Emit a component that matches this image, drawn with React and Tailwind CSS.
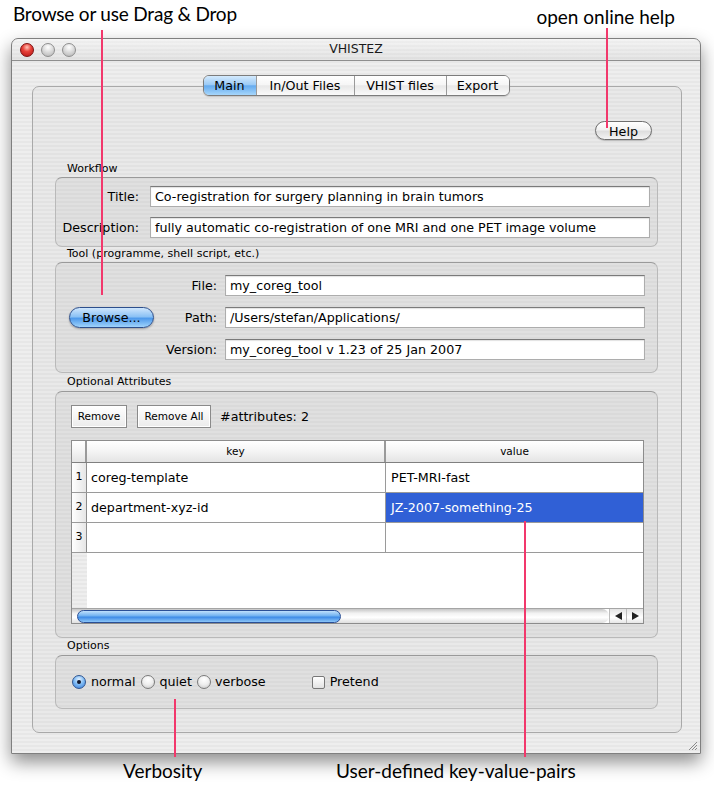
import React from "react";

const stripes =
  "bg-[repeating-linear-gradient(180deg,#eeeeee_0px,#eeeeee_2px,#e7e7e7_2px,#e7e7e7_4px)]";
const panelStripes =
  "bg-[repeating-linear-gradient(180deg,#e9e9e9_0px,#e9e9e9_2px,#e2e2e2_2px,#e2e2e2_4px)]";

function Light({ red }) {
  return red ? (
    <span className="block w-[14px] h-[14px] rounded-full border border-[#7d1010] bg-[radial-gradient(circle_at_50%_28%,#ffc4b8_0%,#e8423a_40%,#b31212_100%)]" />
  ) : (
    <span className="block w-[14px] h-[14px] rounded-full border border-[#8e8e8e] bg-[radial-gradient(circle_at_50%_28%,#ffffff_0%,#dcdcdc_45%,#b0b0b0_100%)]" />
  );
}

function Field({ children, w }) {
  return (
    <div
      className={`${w} h-[21px] bg-white border border-[#adadad] border-t-[#7a7a7a] shadow-[inset_0_1px_1px_rgba(0,0,0,0.12)] px-[4px] flex items-center text-[12.7px] text-black whitespace-nowrap overflow-hidden`}
    >
      {children}
    </div>
  );
}

function Group({ h, children, className = "" }) {
  return (
    <div
      className={`ml-[22px] w-[603px] ${h} rounded-[7px] border border-[#b9b9b9] border-t-[#9a9a9a] bg-black/[0.035] ${className}`}
    >
      {children}
    </div>
  );
}

function Label({ children, h }) {
  return (
    <div className={`${h} pl-[34px] text-[11px] flex items-center text-black`}>
      {children}
    </div>
  );
}

function Radio({ on, className = "" }) {
  return on ? (
    <span className={`flex w-[14px] h-[14px] rounded-full border border-[#2f5590] bg-[radial-gradient(circle_at_50%_30%,#e4f2ff_0%,#7bb8f3_50%,#3979d6_100%)] items-center justify-center ${className}`}>
      <span className="block w-[4px] h-[4px] rounded-full bg-[#101830]" />
    </span>
  ) : (
    <span className={`block w-[14px] h-[14px] rounded-full border border-[#7a7a7a] bg-[radial-gradient(circle_at_50%_30%,#ffffff_0%,#eeeeee_50%,#c4c4c4_100%)] ${className}`} />
  );
}

export default function App() {
  const tabs = [
    { name: "Main", w: "w-[52px]", on: true },
    { name: "In/Out Files", w: "w-[98px]" },
    { name: "VHIST files", w: "w-[92px]" },
    { name: "Export", w: "w-[63px]" },
  ];
  const rows = [
    ["1", "coreg-template", "PET-MRI-fast"],
    ["2", "department-xyz-id", "JZ-2007-something-25"],
    ["3", "", ""],
  ];

  return (
    <div className="relative w-[714px] h-[788px] bg-white overflow-hidden font-['DejaVu_Sans',sans-serif]">
      {/* top notes */}
      <div className="h-[38px] flex justify-between font-['Lato',sans-serif] text-[19px] leading-[24px] text-black">
        <span className="ml-[13px] mt-[2px] tracking-[-0.2px]">Browse or use Drag &amp; Drop</span>
        <span className="mr-[39px] mt-[5px]">open online help</span>
      </div>

      {/* window */}
      <div className={`ml-[11px] w-[690px] h-[716px] rounded-t-[7px] border border-[#7f7f7f] ${stripes} shadow-[0_8px_18px_rgba(0,0,0,0.45)] flex flex-col`}>
        <div className="h-[22px] grid grid-cols-[80px_1fr_80px] items-center border-b border-[#8e8e8e] rounded-t-[7px] bg-[linear-gradient(180deg,rgba(255,255,255,0.35),rgba(0,0,0,0.04))]">
          <div className="flex gap-[7px] pl-[8px]">
            <Light red />
            <Light />
            <Light />
          </div>
          <div className="text-center text-[12.5px] text-[#1a1a1a]">VHISTEZ</div>
          <div />
        </div>

        {/* tabs */}
        <div className="mt-[14px] flex justify-center relative z-10">
          <div className="flex h-[21px] rounded-[6px] border border-[#7c7c7c] overflow-hidden shadow-[0_1px_1px_rgba(0,0,0,0.15)]">
            {tabs.map((t, i) => (
              <div
                key={t.name}
                className={`${t.w} flex items-center justify-center text-[12.7px] text-black ${i > 0 ? "border-l border-[#9a9a9a]" : ""} ${
                  t.on
                    ? "bg-[linear-gradient(180deg,#d4eafd_0%,#9ccbf6_45%,#65abef_52%,#a6d6fb_100%)]"
                    : "bg-[linear-gradient(180deg,#ffffff_0%,#f6f6f6_45%,#e8e8e8_52%,#fafafa_100%)]"
                }`}
              >
                {t.name}
              </div>
            ))}
          </div>
        </div>

        {/* tab panel */}
        <div className={`-mt-[10px] ml-[20px] w-[650px] h-[647px] rounded-[7px] border border-[#a9a9a9] ${panelStripes} flex flex-col`}>
          <div className="mt-[34px] h-[19px] flex justify-end pr-[29px]">
            <button className="w-[57px] h-[19px] rounded-full border border-[#6e6e6e] bg-[linear-gradient(180deg,#ffffff_0%,#f2f2f2_45%,#dedede_55%,#f4f4f4_100%)] text-[12.7px] text-black shadow-[0_1px_1px_rgba(0,0,0,0.2)]">
              Help
            </button>
          </div>

          <div className="mt-[22px]" />
          <Label h="h-[15px]">Workflow</Label>
          <Group h="h-[70px]" className="flex flex-col pt-[8px] gap-[10px]">
            <div className="flex items-center">
              <span className="w-[83px] text-right text-[12.7px]">Title:</span>
              <span className="ml-[11px]">
                <Field w="w-[500px]">Co-registration for surgery planning in brain tumors</Field>
              </span>
            </div>
            <div className="flex items-center">
              <span className="w-[83px] text-right text-[12.7px]">Description:</span>
              <span className="ml-[11px]">
                <Field w="w-[500px]">fully automatic co-registration of one MRI and one PET image volume</Field>
              </span>
            </div>
          </Group>

          <Label h="h-[15px]">Tool (programme, shell script, etc.)</Label>
          <Group h="h-[111px]" className="flex items-center">
            <button className="ml-[13px] w-[85px] h-[21px] rounded-full border border-[#2d4f8c] bg-[linear-gradient(180deg,#cfe6fd_0%,#8cc2f5_45%,#4f9aeb_55%,#9fd3fb_100%)] text-[12.7px] text-black shadow-[0_1px_2px_rgba(0,0,0,0.3)]">
              Browse...
            </button>
            <div className="flex flex-col gap-[11px]">
              {[
                ["File:", "my_coreg_tool"],
                ["Path:", "/Users/stefan/Applications/"],
                ["Version:", "my_coreg_tool v 1.23 of 25 Jan 2007"],
              ].map(([l, v]) => (
                <div key={l} className="flex items-center">
                  <span className="w-[63px] text-right text-[12.7px]">{l}</span>
                  <span className="ml-[8px]">
                    <Field w="w-[420px]">{v}</Field>
                  </span>
                </div>
              ))}
            </div>
          </Group>

          <Label h="h-[18px]">Optional Attributes</Label>
          <Group h="h-[247px]" className="flex flex-col pt-[13px] pl-[15px]">
            <div className="flex items-center h-[23px]">
              <button className="w-[56px] h-[23px] border border-[#8a8a8a] bg-[linear-gradient(180deg,#ffffff,#ebebeb)] text-[10.5px] text-black shadow-[inset_0_0_0_1px_#ffffff]">
                Remove
              </button>
              <button className="ml-[10px] w-[74px] h-[23px] border border-[#8a8a8a] bg-[linear-gradient(180deg,#ffffff,#ebebeb)] text-[10.5px] text-black shadow-[inset_0_0_0_1px_#ffffff]">
                Remove All
              </button>
              <span className="ml-[9px] text-[12.7px]">#attributes: 2</span>
            </div>

            {/* table */}
            <div className="mt-[12px] w-[573px] h-[184px] border border-[#8c8c8c] bg-white flex flex-col">
              <div className="h-[22px] flex border-b border-[#808080] bg-[linear-gradient(180deg,#ffffff_0%,#f4f4f4_50%,#e4e4e4_100%)] text-[10.5px]">
                <div className="w-[15px] border-r-2 border-[#9a9a9a]" />
                <div className="w-[299px] border-r-2 border-[#9a9a9a] flex items-center justify-center">key</div>
                <div className="flex-1 flex items-center justify-center">value</div>
              </div>
              {rows.map(([n, k, v]) => (
                <div key={n} className="h-[30px] flex border-b border-[#9a9a9a] text-[12.7px]">
                  <div className="w-[15px] border-r border-[#8c8c8c] bg-[linear-gradient(90deg,#ffffff,#e6e6e6)] flex items-center justify-center text-[11px]">
                    {n}
                  </div>
                  <div className="w-[299px] border-r border-[#9a9a9a] flex items-center pl-[4px]">{k}</div>
                  <div
                    className={`flex-1 flex items-center pl-[5px] ${
                      n === "2" ? "bg-[#3060d6] text-white" : ""
                    }`}
                  >
                    {v}
                  </div>
                </div>
              ))}
              <div className="flex-1 flex">
                <div className={`w-[15px] ${stripes}`} />
                <div className="flex-1" />
              </div>
              <div className="h-[15px] flex border-t border-[#a5a5a5]">
                <div className="flex-1 flex items-center pl-[5px] rounded-r-full bg-[linear-gradient(180deg,#c6c6c6_0%,#f2f2f2_30%,#ffffff_60%,#dedede_100%)]">
                  <div className="w-[264px] h-[13px] rounded-full border border-[#2a4f96] bg-[linear-gradient(180deg,#bfe0fc_0%,#6fb1f1_45%,#3d8ae6_55%,#8cc6f8_100%)]" />
                </div>
                <div className="w-[17px] flex items-center justify-center border-l border-[#bdbdbd] bg-[linear-gradient(180deg,#e4e4e4,#ffffff_60%,#e6e6e6)]">
                  <svg width="7" height="8" viewBox="0 0 7 8">
                    <path d="M0 4 L7 0 L7 8 Z" fill="#222" />
                  </svg>
                </div>
                <div className="w-[17px] flex items-center justify-center border-l border-[#bdbdbd] bg-[linear-gradient(180deg,#e4e4e4,#ffffff_60%,#e6e6e6)]">
                  <svg width="7" height="8" viewBox="0 0 7 8">
                    <path d="M7 4 L0 0 L0 8 Z" fill="#222" />
                  </svg>
                </div>
              </div>
            </div>
          </Group>

          <Label h="h-[17px]">Options</Label>
          <Group h="h-[54px]" className="flex items-center pl-[16px] text-[12.7px]">
            <Radio on />
            <span className="ml-[5px]">normal</span>
            <Radio className="ml-[6px]" />
            <span className="ml-[4px]">quiet</span>
            <Radio className="ml-[5px]" />
            <span className="ml-[4px]">verbose</span>
            <span className="block ml-[46px] w-[13px] h-[13px] rounded-[2px] border border-[#777] bg-[linear-gradient(180deg,#ffffff,#e2e2e2)]" />
            <span className="ml-[5px]">Pretend</span>
          </Group>
        </div>

        <div className="flex-1 flex justify-end items-end pr-[2px] pb-[2px]">
          <svg width="11" height="11" viewBox="0 0 11 11">
            <path d="M10 2 L2 10 M10 5 L5 10 M10 8 L8 10" stroke="#8a8a8a" strokeWidth="1" />
          </svg>
        </div>
      </div>

      {/* bottom notes */}
      <div className="relative h-[34px] font-['Lato',sans-serif] text-[19px] leading-[24px] text-black">
        <span className="absolute left-[123px] top-[5px]">Verbosity</span>
        <span className="absolute left-[336px] top-[5px]">User-defined key-value-pairs</span>
      </div>

      {/* pointer lines */}
      <div className="absolute left-[101px] top-[30px] w-[2px] h-[265px] bg-[#f2386c]" />
      <div className="absolute left-[606px] top-[28px] w-[2px] h-[100px] bg-[#f2386c]" />
      <div className="absolute left-[174px] top-[699px] w-[2px] h-[58px] bg-[#f2386c]" />
      <div className="absolute left-[524px] top-[521px] w-[2px] h-[236px] bg-[#f2386c]" />
    </div>
  );
}
